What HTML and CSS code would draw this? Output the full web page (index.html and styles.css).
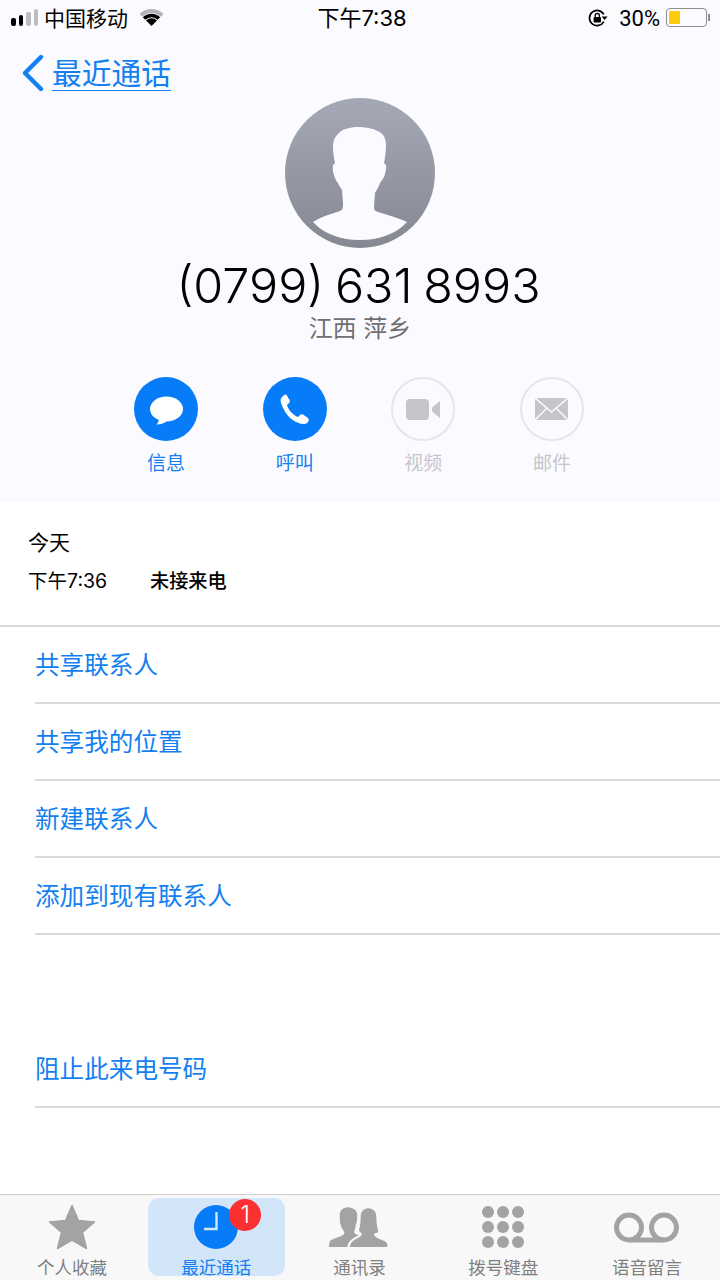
FILE: index.html
```html
<!DOCTYPE html>
<html lang="zh-CN">
<head>
    <meta charset="UTF-8">
    <meta name="viewport" content="width=device-width, initial-scale=1.0">
    <title>最近通话</title>
    <link rel="stylesheet" href="styles.css">
</head>
<body>
    <div class="phone">
        <div class="header">
            <div class="status-bar">
                <div class="status-left">
                    <div class="signal"><i class="on s1"></i><i class="on s2"></i><i class="s3"></i><i class="s4"></i></div>
                    <span class="carrier">中国移动</span>
                    <svg class="wifi" width="25" height="17" viewBox="0 0 25 17">
                        <path d="M0.500 5 A17 17 0 0 1 24.500 5 L21.700 7.800 A13 13 0 0 0 3.300 7.800 Z" fill="#b4b4b8"/>
                        <path d="M3.800 8.300 A12.300 12.300 0 0 1 21.200 8.300 L18.700 10.800 A8.800 8.800 0 0 0 6.300 10.800 Z" fill="#000"/>
                        <path d="M7 11.500 A7.800 7.800 0 0 1 18 11.500 L12.500 17 Z" fill="#000"/>
                    </svg>
                </div>
                <div class="status-time">下午7:38</div>
                <div class="status-right">
                    <svg class="lock" width="20" height="18" viewBox="0 0 20 18">
                        <path d="M15.800 12.600 A7.600 7.600 0 1 1 15.800 5.400" fill="none" stroke="#000" stroke-width="1.700"/>
                        <path d="M13.600 7.600 L19.600 7.600 L16.600 11 Z" fill="#000"/>
                        <rect x="5.600" y="8" width="7.400" height="5.600" rx="1" fill="#000"/>
                        <path d="M7.200 8 V6.600 A2.100 2.100 0 0 1 11.400 6.600 V8" fill="none" stroke="#000" stroke-width="1.300"/>
                    </svg>
                    <span class="percent">30%</span>
                    <div class="battery"><div class="battery-level"></div></div>
                    <div class="battery-tip"></div>
                </div>
            </div>

            <div class="nav">
                <svg width="24" height="38" viewBox="0 0 24 38">
                    <path d="M20 3 L4 19 L20 35" fill="none" stroke="#137ff0" stroke-width="4.400" stroke-linecap="round" stroke-linejoin="round"/>
                </svg>
                <a class="back-link">最近通话</a>
            </div>

            <div class="avatar">
                <svg width="150" height="150" viewBox="0 0 150 150">
                    <defs>
                        <linearGradient id="avatarBg" x1="0" y1="0" x2="0" y2="1">
                            <stop offset="0" stop-color="#a5a9b5"/>
                            <stop offset="1" stop-color="#858893"/>
                        </linearGradient>
                    </defs>
                    <circle cx="75" cy="75" r="75" fill="url(#avatarBg)"/>
                    <path d="M73 29 C65 29 57 31 53 36 C49 40 48 44 48 50 C48 55 49 60 50 65 L48 67 C47.500 72 48 75 49 77 C50 81 52 84 53 85 C54 88 56 90 57 92 L58 105 C58 110 58 112 55 113 L40 118 C35 120 31 122 28 124 C39 136 56 142 75 142 C94 142 111 136 122 124 C118 122 112 120 106 118 L93 114 C90 113 89 112 89 108 L90 95 C92 92 94 88 95 85 C97 82 99 80 100 76 C101 72 101.500 69 101 67 L99 65 C100 60 101 53 101 47 C101 43 100 38 96 35 C91 31 81 29 73 29 Z" fill="#fbfbff"/>
                </svg>
            </div>
            <div class="number">(0799) 631 8993</div>
            <div class="location">江西 萍乡</div>

            <div class="actions">
                <div class="action">
                    <div class="action-icon active">
                        <svg width="34" height="34" viewBox="0 0 34 34">
                            <ellipse cx="17.500" cy="17" rx="16.500" ry="12.500" fill="#fff"/>
                            <path d="M10 26 C10 29 9 31 7.500 32.500 C12 32.500 16 31 19 28 Z" fill="#fff"/>
                        </svg>
                    </div>
                    <span class="action-label active">信息</span>
                </div>
                <div class="action">
                    <div class="action-icon active">
                        <svg width="34" height="34" viewBox="0 0 34 34">
                            <path d="M4 5 C3 6 2 8 3 11 C5 17 8 22 12 26 C17 30 22 32 26 32 C28 32 29 31 30 30 C31 29 31 27 30 26 L25 22.500 C24 22 23 22 22 23 L20 25 C17 24 14 21.500 12 19 C10.500 17 9.500 15 9 13 L11 11 C12 10 12 9 11.500 8 L8.500 3 C7.500 2 6 3 4 5 Z" fill="#fff"/>
                        </svg>
                    </div>
                    <span class="action-label active">呼叫</span>
                </div>
                <div class="action">
                    <div class="action-icon">
                        <svg width="34" height="21" viewBox="0 0 34 21">
                            <rect x="0" y="0" width="23" height="21" rx="4" fill="#c5c5ca"/>
                            <path d="M26 8.500 L34 2 V19 L26 12.500 Z" fill="#c5c5ca"/>
                        </svg>
                    </div>
                    <span class="action-label">视频</span>
                </div>
                <div class="action">
                    <div class="action-icon">
                        <svg width="33" height="22" viewBox="0 0 33 22">
                            <rect width="33" height="22" fill="#c5c5ca"/>
                            <path d="M0 0 L16.500 14 L33 0 M0 22 L12 10 M33 22 L21 10" fill="none" stroke="#fbfbff" stroke-width="1.500"/>
                        </svg>
                    </div>
                    <span class="action-label">邮件</span>
                </div>
            </div>
        </div>

        <div class="call-info">
            <div class="call-day">今天</div>
            <div class="call-row">
                <span class="call-time">下午7:36</span>
                <span class="call-type">未接来电</span>
            </div>
        </div>

        <div class="group first">
            <div class="row">共享联系人</div>
            <div class="row">共享我的位置</div>
            <div class="row">新建联系人</div>
            <div class="row">添加到现有联系人</div>
        </div>
        <div class="group second">
            <div class="row">阻止此来电号码</div>
        </div>

        <div class="tabbar">
            <div class="tab">
                <div class="tab-icon">
                    <svg width="48" height="46" viewBox="0 0 48 46">
                        <path d="M24 1.500 L30.500 16.500 L46.500 18 L34.500 28.500 L38.500 44.500 L24 36 L9.500 44.500 L13.500 28.500 L1.500 18 L17.500 16.500 Z" fill="#a3a3a3" stroke="#a3a3a3" stroke-width="1.500" stroke-linejoin="round"/>
                    </svg>
                </div>
                <span class="tab-label">个人收藏</span>
            </div>
            <div class="tab current">
                <div class="tab-icon">
                    <div class="clock-wrap">
                        <svg width="44" height="44" viewBox="0 0 44 44">
                            <circle cx="22" cy="22" r="22" fill="#077cf8"/>
                            <path d="M22.500 7 V24 H10" fill="none" stroke="#d3e6f9" stroke-width="2.400"/>
                        </svg>
                        <span class="badge">1</span>
                    </div>
                </div>
                <span class="tab-label">最近通话</span>
            </div>
            <div class="tab">
                <div class="tab-icon">
                    <svg width="60" height="40" viewBox="0 0 60 40">
                        <path d="M19 0.300 C13.500 0.300 10.700 4 10.700 8 C10.700 12 10.800 15 11.700 18 C12.500 21 14 23 15 24.700 C15.500 26.500 15 27.500 14 28 C10 30.500 4 31.500 1.500 33.500 C0.500 34.500 0 37 0 40 L18.300 40 C18.800 35 23 31 29.500 28.500 C27.500 27.500 25 26.500 25 24.700 C26 23 26.500 21 26.700 18 C28 15 28.300 12 28.300 8 C28.300 4 24.500 0.300 19 0.300 Z" fill="#a3a3a3"/>
                        <path d="M39.300 1.300 C34.500 1.300 31.700 5 31.700 9.700 C31.700 15 31 20 30 23 C30.500 25 32 26 32.700 26.300 C33 29 31 30 28 31.500 C25 33 21.500 35 20.700 40 L58.300 40 C58.500 37.500 58 35.500 56.700 34.700 C53 32.500 46 31 45 28 C45 27 45.500 26.500 46 26 C47.500 26 49 25.500 49.300 24.700 C48 20 47.300 15 47.300 9.700 C47.300 5 44.500 1.300 39.300 1.300 Z" fill="#a3a3a3"/>
                    </svg>
                </div>
                <span class="tab-label">通讯录</span>
            </div>
            <div class="tab">
                <div class="tab-icon">
                    <div class="keypad"><i></i><i></i><i></i><i></i><i></i><i></i><i></i><i></i><i></i></div>
                </div>
                <span class="tab-label">拨号键盘</span>
            </div>
            <div class="tab">
                <div class="tab-icon">
                    <svg width="66" height="31" viewBox="0 0 66 31">
                        <circle cx="15" cy="15.500" r="12.500" fill="none" stroke="#a3a3a3" stroke-width="5"/>
                        <circle cx="50" cy="15.500" r="12.500" fill="none" stroke="#a3a3a3" stroke-width="5"/>
                        <rect x="15" y="25.500" width="35" height="5" fill="#a3a3a3"/>
                    </svg>
                </div>
                <span class="tab-label">语音留言</span>
            </div>
        </div>
    </div>
</body>
</html>
```

FILE: styles.css
```css
* { box-sizing: border-box; }
body { margin: 0; padding: 0; background: #fff; font-family: Inter, "Noto Sans CJK SC", sans-serif; color: #000; }
.phone { width: 720px; height: 1280px; display: flex; flex-direction: column; overflow: hidden; }

.header { height: 502px; background: #fbfbff; }
.status-bar { height: 36px; display: grid; grid-template-columns: 1fr auto 1fr; align-items: center; padding: 0 10px 1px 11px; font-size: 21px; }
.status-left { display: flex; align-items: center; }
.signal { display: flex; align-items: flex-end; gap: 3px; height: 17px; }
.signal i { display: block; width: 4.500px; background: #bcbcc0; border-radius: 2px; }
.signal .on { background: #000; }
.s1 { height: 8px; }
.s2 { height: 11px; }
.s3 { height: 14px; }
.s4 { height: 17px; }
.carrier { margin: 0 0 2px 6px; }
.wifi { margin-left: 11px; }
.status-time { font-size: 22px; margin: 0 0 3px 3px; }
.status-right { display: flex; align-items: center; justify-content: flex-end; }
.percent { margin: 2px 0 0 11px; font-family: Roboto, sans-serif; font-size: 22px; }
.battery { width: 41px; height: 19px; margin-left: 6px; border: 1.500px solid #8e8e92; border-radius: 4px; padding: 2px; }
.battery-level { width: 11px; height: 100%; background: #fccb0e; border-radius: 1px; }
.battery-tip { width: 2px; height: 7px; margin-left: 1px; background: #8e8e92; }

.nav { height: 52px; display: flex; align-items: center; padding: 22px 0 0 21px; }
.back-link { margin-left: 7px; font-size: 29.750px; line-height: 34px; color: #137ff0; border-bottom: 1.500px solid #137ff0; }

.avatar { margin-top: 10px; display: flex; justify-content: center; }
.avatar svg { display: block; }
.number { margin-top: 9px; padding-right: 3px; text-align: center; font-size: 48.500px; line-height: 58px; font-weight: 350; word-spacing: -3px; }
.location { text-align: center; font-size: 24px; line-height: 30px; color: #6e6e73; margin-top: -1px; }

.actions { margin-top: 33px; display: flex; justify-content: center; gap: 64.670px; padding-right: 2px; }
.action { display: flex; flex-direction: column; align-items: center; width: 64px; }
.action-icon { width: 64px; height: 64px; border-radius: 50%; border: 2px solid #e6e6ea; display: flex; align-items: center; justify-content: center; }
.action-icon.active { background: #077cf8; border: none; }
.action-label { margin-top: 10px; font-size: 19px; line-height: 26px; color: #c5c5ca; }
.action-label.active { color: #137ff0; }

.call-info { height: 125px; padding: 26px 0 0 28px; border-bottom: 2px solid #d9d9dc; font-size: 21px; }
.call-day { line-height: 30px; }
.call-row { margin-top: 8px; display: flex; line-height: 30px; font-size: 19.200px; }
.call-time { width: 122px; font-size: 19.500px; }
.call-type { font-weight: 500; }

.group { padding-left: 35px; }
.row { height: 77px; display: flex; align-items: center; padding-bottom: 3px; border-bottom: 2px solid #d9d9dc; font-size: 24.600px; color: #137ff0; }
.second { margin-top: 96px; }

.tabbar { margin-top: auto; height: 86px; display: grid; grid-template-columns: repeat(5, 1fr); background: #f8f8f8; border-top: 1px solid #cfcfcf; padding: 3px 1px 0 0; }
.tab { display: flex; flex-direction: column; align-items: center; padding-top: 5px; color: #7f7f7f; }
.tab-icon { flex-shrink: 0; height: 48px; display: flex; align-items: center; justify-content: center; }
.tab-label { flex-shrink: 0; font-size: 17.500px; line-height: 24px; height: 24px; margin-top: 5px; }
.tab.current { width: 137px; height: 78px; margin-left: 4px; background: #d3e6f9; border-radius: 11px; }
.tab.current .tab-label { color: #137ff0; }
.clock-wrap { position: relative; width: 44px; height: 44px; }
.clock-wrap svg { display: block; }
.badge { position: absolute; top: -6px; left: 35px; width: 32px; height: 32px; border-radius: 50%; background: #fb3131; color: #fff; font-size: 24px; line-height: 32px; text-align: center; font-weight: 300; }
.keypad { display: grid; grid-template-columns: repeat(3, 12px); gap: 3px; }
.keypad i { display: block; width: 12px; height: 12px; border-radius: 50%; background: #a3a3a3; }
```
